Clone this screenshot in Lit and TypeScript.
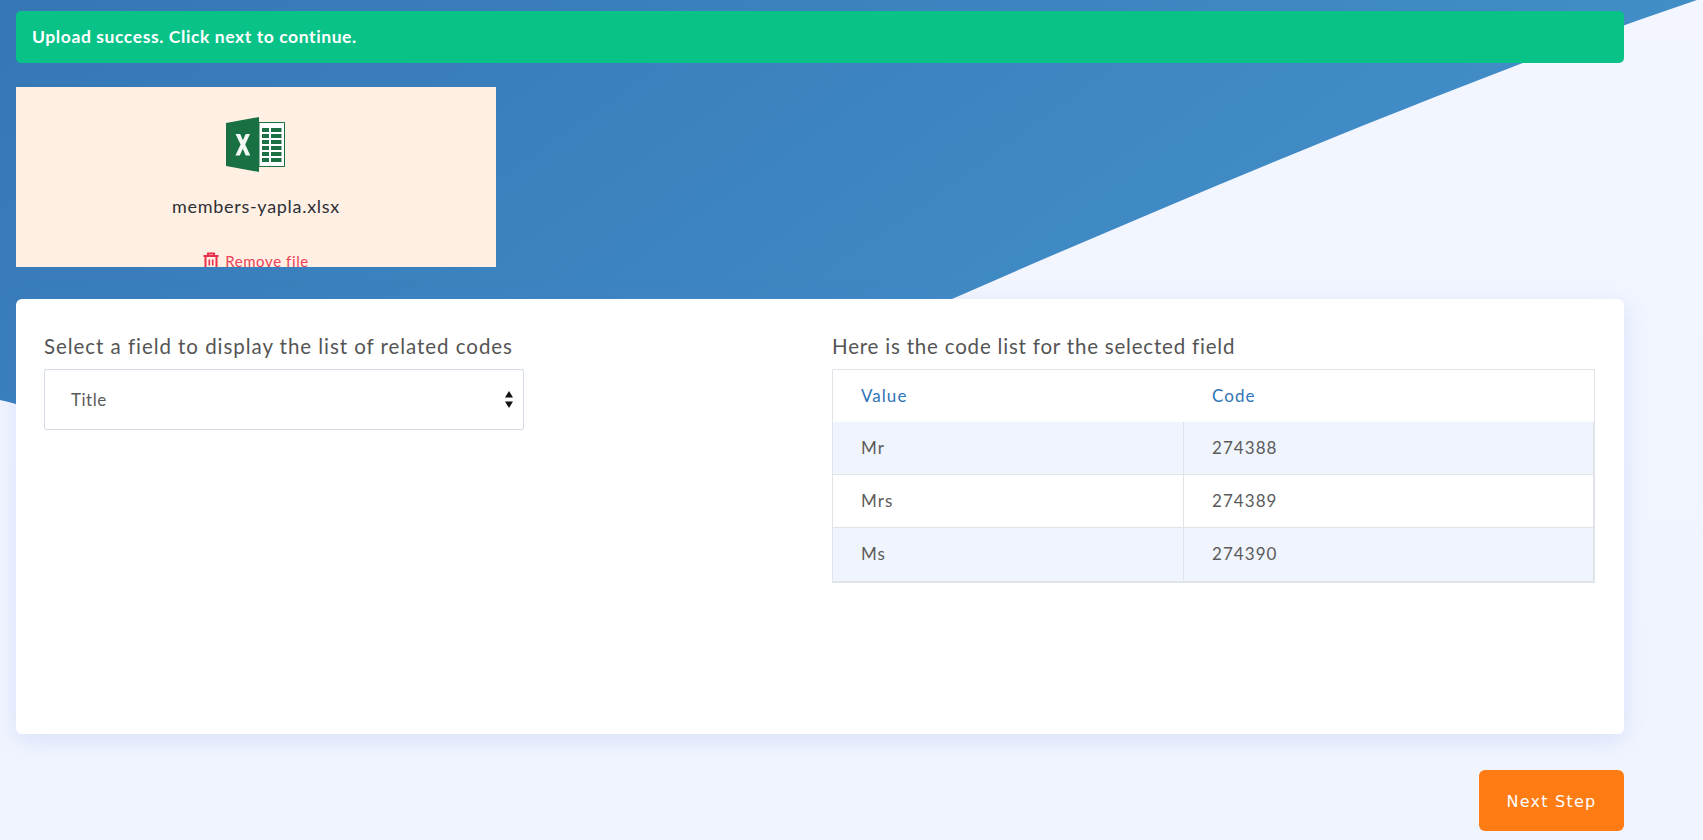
import { LitElement, html, css, svg } from "lit";
import { customElement } from "lit/decorators.js";

const rows = [
  ["Mr", "274388"],
  ["Mrs", "274389"],
  ["Ms", "274390"],
];

@customElement("app-root")
export class AppRoot extends LitElement {
  static styles = css`
    :host {
      display: block;
      position: relative;
      width: 100%;
      height: 840px;
      overflow: hidden;
      background: linear-gradient(180deg, #f3f6ff 0%, #f0f4fd 100%);
      font-family: "Lato", "Open Sans", sans-serif;
      color: #5b5b5b;
    }
    .bg { position: absolute; left: 0; top: 0; width: 1703px; height: 840px; }
    .page {
      position: relative;
      box-sizing: border-box;
      width: 1608px;
      margin-left: 16px;
      padding-top: 11px;
      display: flex;
      flex-direction: column;
    }
    .alert {
      height: 52px;
      box-sizing: border-box;
      background: #09c288;
      border-radius: 5px;
      color: #fff;
      font-weight: 700;
      font-size: 17.5px;
      letter-spacing: 0.59px;
      padding: 0 16px 1px;
      display: flex;
      align-items: center;
    }
    .file {
      margin-top: 24px;
      width: 480px;
      height: 180px;
      background: #fff0e3;
      overflow: hidden;
      display: flex;
      flex-direction: column;
      align-items: center;
    }
    .file > * { flex-shrink: 0; }
    .xl { margin: 30px 1px 0 0; width: 59px; height: 56px; display: block; }
    .fname { margin-top: 21px; font-size: 18px; line-height: 24px; color: #2d2f36; letter-spacing: 0.7px; }
    .remove {
      margin-top: 34px;
      display: flex;
      align-items: center;
      gap: 6px;
      color: #ec4058;
      font-size: 15px;
      line-height: 18px;
      letter-spacing: 0.6px;
    }
    .remove svg { width: 16px; height: 18px; display: block; }
    .card {
      margin-top: 32px;
      height: 435px;
      box-sizing: border-box;
      background: #fff;
      border-radius: 6px;
      box-shadow: 0 6px 24px rgba(90, 130, 235, 0.16);
      padding: 34px 28px 0;
      display: grid;
      grid-template-columns: 480px 763px;
      column-gap: 308px;
    }
    h2 {
      margin: 0 0 10px;
      font-size: 20.5px;
      line-height: 26px;
      font-weight: 400;
      letter-spacing: 0.95px;
      color: #555;
      white-space: nowrap;
    }
    h2.tight { letter-spacing: 0.8px; }
    .sel { position: relative; }
    select {
      appearance: none;
      -webkit-appearance: none;
      display: block;
      width: 100%;
      height: 61px;
      box-sizing: border-box;
      background: #fff;
      border: 1px solid #d3dbe6;
      border-radius: 2px;
      padding: 0 26px;
      font: inherit;
      font-size: 17px;
      letter-spacing: 0.5px;
      color: #5b5b5b;
    }
    .arrows { position: absolute; right: 11px; top: 22px; width: 8px; height: 17px; pointer-events: none; }
    .twrap {
      border: 1px solid #e1e3ea;
      border-width: 1px 1px 2px 1px;
      height: 214px;
      box-sizing: border-box;
    }
    table { width: 100%; border-collapse: separate; border-spacing: 0; font-size: 17px; letter-spacing: 1.05px; }
    th {
      height: 52px;
      padding: 0 0 2px 28px;
      text-align: left;
      font-weight: 400;
      color: #2f75b5;
      box-sizing: border-box;
    }
    td {
      height: 53px;
      padding: 0 0 2px 28px;
      box-sizing: border-box;
      border-bottom: 1px solid #e1e3ea;
      border-right: 1px solid #e1e3ea;
    }
    td:first-child, th:first-child { width: 351px; }
    tr.odd td { background: #f0f4fd; }
    tr:last-child td { border-bottom: 0; height: 53px; }
    .foot { margin-top: 36px; display: flex; justify-content: flex-end; }
    button {
      width: 145px;
      height: 61px;
      border: 0;
      border-radius: 6px;
      background: #ff7c14;
      color: #fff;
      font-family: "DejaVu Sans", sans-serif;
      font-size: 16px;
      letter-spacing: 1.25px;
      padding: 1px 0 0;
    }
  `;

  render() {
    return html`
      <svg class="bg" viewBox="0 0 1703 840" aria-hidden="true">
        <defs>
          <linearGradient id="g" x1="0" y1="0" x2="1" y2="0.35">
            <stop offset="0" stop-color="#3577b5" />
            <stop offset="1" stop-color="#4390c9" />
          </linearGradient>
        </defs>
        ${svg`<path d="M0 0H1697C1500 66 1200 190 952 299L600 420H60C40 412 20 404 0 400Z" fill="url(#g)" />`}
      </svg>
      <div class="page">
        <div class="alert">Upload success. Click next to continue.</div>
        <div class="file">
          <svg class="xl" viewBox="0 0 59 56" aria-hidden="true">
            <path d="M33 5.5H58.5V49.5H33Z" fill="#fff" stroke="#1d6f42" stroke-width="1" />
            <path d="M36 11H43V15H36ZM45 11H55.5V15H45ZM36 17H43V21H36ZM45 17H55.5V21H45ZM36 23H43V27H36ZM45 23H55.5V27H45ZM36 29H43V33H36ZM45 29H55.5V33H45ZM36 35H43V39H36ZM45 35H55.5V39H45ZM36 41H43V45H36ZM45 41H55.5V45H45Z" fill="#1d7044" />
            <path d="M0 6L33 0V55L0 49Z" fill="#197143" />
            <path d="M9.5 17H14.2L16.9 23.3L19.7 17H24L19.2 27.6L24.3 38.5H19.7L16.8 31.8L13.8 38.5H9.4L14.6 27.6Z" fill="#f3f8f4" />
          </svg>
          <div class="fname">members-yapla.xlsx</div>
          <div class="remove">
            <svg viewBox="0 0 16 18" fill="none" stroke="#ec2f4b" stroke-width="2" aria-hidden="true">
              <path d="M0.5 4H15.5M5 4V1.5H11V4M2.5 4V16.5C2.5 17 3 17 3 17H13C13 17 13.5 17 13.5 16.5V4" />
              <path d="M6.3 7.5V13.5M9.7 7.5V13.5" stroke-width="1.6" />
            </svg>
            <span>Remove file</span>
          </div>
        </div>
        <div class="card">
          <div>
            <h2>Select a field to display the list of related codes</h2>
            <div class="sel">
              <select><option>Title</option></select>
              <svg class="arrows" viewBox="0 0 8 17" aria-hidden="true"><path d="M4 0L8 6.5H0ZM0 10.5H8L4 17Z" fill="#111" /></svg>
            </div>
          </div>
          <div>
            <h2 class="tight">Here is the code list for the selected field</h2>
            <div class="twrap">
              <table>
                <thead><tr><th>Value</th><th>Code</th></tr></thead>
                <tbody>
                  ${rows.map(
                    (r, i) => html`<tr class=${i % 2 === 0 ? "odd" : ""}><td>${r[0]}</td><td>${r[1]}</td></tr>`
                  )}
                </tbody>
              </table>
            </div>
          </div>
        </div>
        <div class="foot"><button>Next Step</button></div>
      </div>
    `;
  }
}
